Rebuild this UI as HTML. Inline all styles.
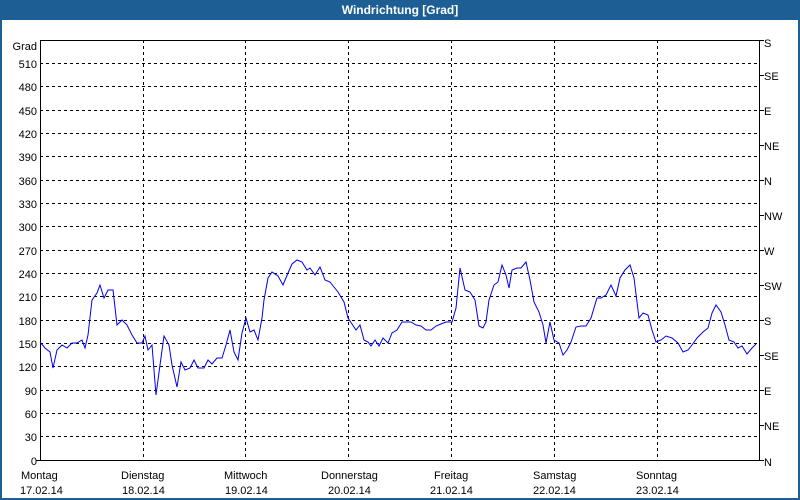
<!DOCTYPE html>
<html><head><meta charset="utf-8"><style>
html,body{margin:0;padding:0;width:800px;height:500px;overflow:hidden;background:#fff}
</style></head><body>
<svg width="800" height="500" xmlns="http://www.w3.org/2000/svg" font-family="Liberation Sans, sans-serif" font-size="11">
<rect x="0" y="0" width="800" height="500" fill="#1d5f95"/>
<rect x="2" y="20" width="796" height="478" fill="#fff"/>
<text x="400" y="14" fill="#fff" font-weight="bold" font-size="12" text-anchor="middle">Windrichtung [Grad]</text>
<g stroke="#000" stroke-dasharray="3,3" stroke-width="1">
<line x1="40" x2="760" y1="63.5" y2="63.5"/><line x1="40" x2="760" y1="86.5" y2="86.5"/><line x1="40" x2="760" y1="110.5" y2="110.5"/><line x1="40" x2="760" y1="133.5" y2="133.5"/><line x1="40" x2="760" y1="156.5" y2="156.5"/><line x1="40" x2="760" y1="180.5" y2="180.5"/><line x1="40" x2="760" y1="203.5" y2="203.5"/><line x1="40" x2="760" y1="226.5" y2="226.5"/><line x1="40" x2="760" y1="250.5" y2="250.5"/><line x1="40" x2="760" y1="273.5" y2="273.5"/><line x1="40" x2="760" y1="296.5" y2="296.5"/><line x1="40" x2="760" y1="320.5" y2="320.5"/><line x1="40" x2="760" y1="343.5" y2="343.5"/><line x1="40" x2="760" y1="366.5" y2="366.5"/><line x1="40" x2="760" y1="390.5" y2="390.5"/><line x1="40" x2="760" y1="413.5" y2="413.5"/><line x1="40" x2="760" y1="436.5" y2="436.5"/>
<line y1="40" y2="460" x1="143.5" x2="143.5"/><line y1="40" y2="460" x1="245.5" x2="245.5"/><line y1="40" y2="460" x1="348.5" x2="348.5"/><line y1="40" y2="460" x1="451.5" x2="451.5"/><line y1="40" y2="460" x1="554.5" x2="554.5"/><line y1="40" y2="460" x1="657.5" x2="657.5"/>
</g>
<rect x="40.5" y="40.5" width="719" height="420" fill="none" stroke="#000"/>
<g stroke="#000"><line x1="760" x2="764" y1="40.5" y2="40.5"/><line x1="760" x2="764" y1="75.5" y2="75.5"/><line x1="760" x2="764" y1="110.5" y2="110.5"/><line x1="760" x2="764" y1="145.5" y2="145.5"/><line x1="760" x2="764" y1="180.5" y2="180.5"/><line x1="760" x2="764" y1="215.5" y2="215.5"/><line x1="760" x2="764" y1="250.5" y2="250.5"/><line x1="760" x2="764" y1="285.5" y2="285.5"/><line x1="760" x2="764" y1="320.5" y2="320.5"/><line x1="760" x2="764" y1="355.5" y2="355.5"/><line x1="760" x2="764" y1="390.5" y2="390.5"/><line x1="760" x2="764" y1="425.5" y2="425.5"/><line x1="760" x2="764" y1="460.5" y2="460.5"/>
<line x1="36" x2="40" y1="460.5" y2="460.5"/></g>
<g text-anchor="end" fill="#000">
<text x="37" y="50">Grad</text><text x="37" y="68">510</text><text x="37" y="91">480</text><text x="37" y="115">450</text><text x="37" y="138">420</text><text x="37" y="161">390</text><text x="37" y="185">360</text><text x="37" y="208">330</text><text x="37" y="231">300</text><text x="37" y="255">270</text><text x="37" y="278">240</text><text x="37" y="301">210</text><text x="37" y="325">180</text><text x="37" y="348">150</text><text x="37" y="371">120</text><text x="37" y="395">90</text><text x="37" y="418">60</text><text x="37" y="441">30</text><text x="37" y="465">0</text>
</g>
<g fill="#000">
<text x="764" y="47">S</text><text x="764" y="80">SE</text><text x="764" y="115">E</text><text x="764" y="150">NE</text><text x="764" y="185">N</text><text x="764" y="220">NW</text><text x="764" y="255">W</text><text x="764" y="290">SW</text><text x="764" y="325">S</text><text x="764" y="360">SE</text><text x="764" y="395">E</text><text x="764" y="430">NE</text><text x="764" y="466">N</text>
<text x="21" y="479">Montag</text><text x="20" y="494">17.02.14</text>
<text x="121" y="479">Dienstag</text><text x="122" y="494">18.02.14</text>
<text x="224" y="479">Mittwoch</text><text x="225" y="494">19.02.14</text>
<text x="321" y="479">Donnerstag</text><text x="328" y="494">20.02.14</text>
<text x="434" y="479">Freitag</text><text x="430" y="494">21.02.14</text>
<text x="533" y="479">Samstag</text><text x="533" y="494">22.02.14</text>
<text x="636" y="479">Sonntag</text><text x="636" y="494">23.02.14</text>
</g>
<polyline fill="none" stroke="#0000ee" stroke-width="1" points="40,342 45,348 50,352 53,368 57,350 62,345 67,348 72,343 77,343 82,340 85,348 88,335 92,300 97,293 100,285 104,298 108,290 113,290 117,325 122,320 127,325 132,335 137,343 142,343 145,336 148,350 152,345 156,395 160,365 164,336 169,345 172,365 177,387 181,362 185,370 190,368 194,360 198,368 204,368 208,360 212,364 217,358 222,358 226,345 230,330 234,352 238,360 242,333 246,318 250,332 254,330 258,340 262,318 264,300 268,278 272,272 278,276 283,285 288,273 292,264 297,260 302,262 307,270 310,268 315,275 320,267 325,280 330,282 334,287 338,292 344,302 348,318 352,324 356,330 360,325 364,340 368,342 371,346 375,340 379,346 383,338 388,343 392,333 397,330 402,322 406,322 411,322 416,325 421,326 426,330 431,330 436,326 441,324 446,322 452,322 456,308 460,268 465,290 470,292 475,300 479,326 483,328 486,322 489,300 494,285 498,282 502,265 506,275 509,288 512,270 517,268 521,268 526,262 530,280 534,302 539,312 543,325 546,343 550,322 554,340 559,343 563,355 567,350 571,342 576,327 581,326 586,326 591,318 597,298 601,298 606,295 611,285 616,296 620,278 625,270 630,265 634,278 639,318 643,313 648,315 652,330 656,342 661,340 666,336 672,338 678,343 683,352 688,350 692,345 697,338 703,332 708,328 712,313 716,305 721,312 725,325 729,340 734,342 738,348 742,346 747,354 752,348 756,344"/>
</svg>
</body></html>
